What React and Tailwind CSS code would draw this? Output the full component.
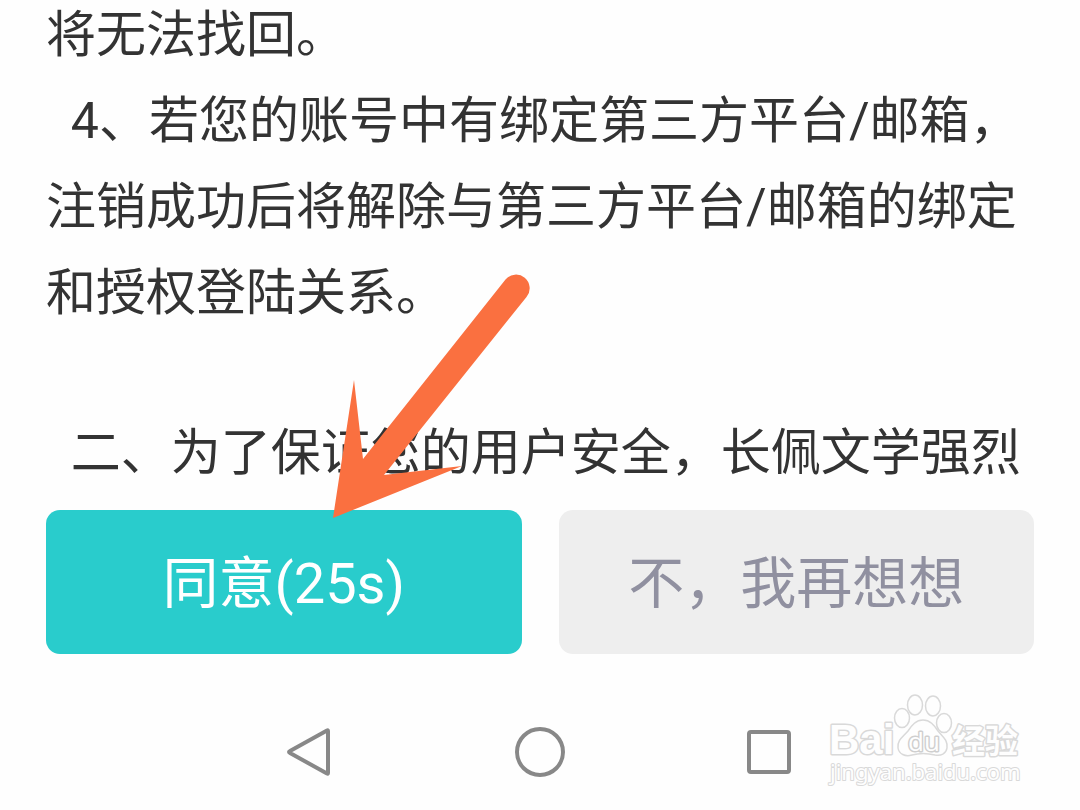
const terms = [
  '将无法找回。',
  '  4、若您的账号中有绑定第三方平台/邮箱，注销成功后将解除与第三方平台/邮箱的绑定和授权登陆关系。',
];

const notice = '  二、为了保证您的用户安全，长佩文学强烈';

const NavButton = ({ label, children }) => (
  <button type="button" aria-label={label} className="cursor-pointer">
    <svg viewBox="0 0 50 50" className="size-[50px]" fill="none" stroke="#888888" strokeWidth="4" strokeLinejoin="round">
      {children}
    </svg>
  </button>
);

const Arrow = () => (
  <svg
    viewBox="0 0 200 246"
    className="absolute left-[331px] top-[273px] w-[200px] h-[246px] pointer-events-none"
    fill="#fa7040"
    aria-hidden="true"
  >
    <path d="M2 245 L23 107 L32 186 L174.500 6.500 A13.500 13.500 0 0 1 195.500 24 L53 202 L131 193 Z" />
  </svg>
);

const Watermark = () => (
  <svg
    viewBox="0 0 200 96"
    className="absolute right-[54px] bottom-[20px] w-[200px] h-[96px] pointer-events-none"
    fill="#fefefe"
    stroke="#d9d9d9"
    strokeWidth="1.500"
    strokeLinejoin="round"
    aria-hidden="true"
  >
    <text x="3" y="60" strokeWidth="3" paintOrder="stroke" className="font-['Liberation_Sans'] font-bold text-[42px]">
      Bai
    </text>
    <ellipse cx="76" cy="24" rx="7.500" ry="9.500" />
    <ellipse cx="89" cy="11" rx="7.500" ry="10" />
    <ellipse cx="107" cy="12" rx="7.500" ry="10" />
    <ellipse cx="118" cy="29" rx="7.500" ry="9.500" />
    <path d="M97 26 C104 26 108 31 112 37 C117 43 122 46 121 54 C120 60 115 62 109 61 C101 59 93 59 86 61 C79 63 73 60 72 54 C71 46 77 43 82 37 C86 31 90 26 97 26 Z" />
    <text x="82" y="57" strokeWidth="3" paintOrder="stroke" stroke="#cfcfcf" className="font-['Open_Sans'] text-[26px]">
      du
    </text>
    <text x="126" y="59" strokeWidth="3" paintOrder="stroke" className="font-['Noto_Sans_CJK_SC'] font-bold text-[33px]">
      经验
    </text>
    <text x="4" y="86" strokeWidth="2" paintOrder="stroke" className="font-['Noto_Sans'] text-[22px]">
      jingyan.baidu.com
    </text>
  </svg>
);

export default function App() {
  return (
    <div className="relative min-h-screen overflow-hidden bg-[#fefefe] font-[Roboto,'Noto_Sans_CJK_SC',sans-serif]">
      <main className="px-[46px]">
        <div className="-mt-2 text-[50px] leading-[86px] text-[#333333] whitespace-pre-wrap">
          {terms.map((text) => (
            <p key={text}>{text}</p>
          ))}
          <p className="mt-[74px]">{notice}</p>
        </div>
        <div className="mt-[14px] grid grid-cols-2 gap-[37px] text-[56px]">
          <button type="button" className="h-36 pt-1 rounded-[14px] bg-[#29cccc] text-white cursor-pointer">
            同意(25s)
          </button>
          <button type="button" className="h-36 pt-1 rounded-[14px] bg-[#eeeeee] text-[#9090a0] cursor-pointer">
            不，我再想想
          </button>
        </div>
      </main>

      <nav className="flex justify-center gap-[180px] pt-[73px] pb-[33px]">
        <NavButton label="返回">
          <path d="M43 4 V46 Q43 47 42 46.500 L5 26 Q3 25 5 24 L42 3.500 Q43 3 43 4 Z" />
        </NavButton>
        <NavButton label="主页">
          <circle cx="25" cy="25" r="23" />
        </NavButton>
        <NavButton label="最近任务">
          <rect x="4" y="5" width="40" height="40" rx="2" />
        </NavButton>
      </nav>

      <Arrow />
      <Watermark />
    </div>
  );
}
